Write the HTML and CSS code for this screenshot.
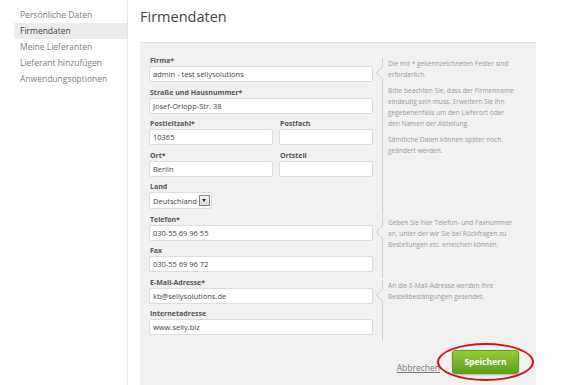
FILE: index.html
```html
<!DOCTYPE html>
<html lang="de">
<head>
  <meta charset="UTF-8" />
  <title>Firmendaten</title>
  <link rel="stylesheet" href="styles.css">
</head>
<body>
  <div class="layout">
    <ul class="sidebar">
      <li>Persönliche Daten</li>
      <li class="active">Firmendaten</li>
      <li>Meine Lieferanten</li>
      <li>Lieferant hinzufügen</li>
      <li>Anwendungsoptionen</li>
    </ul>

    <div class="main">
      <h1>Firmendaten</h1>

      <div class="panel">
        <!-- Adresse -->
        <div class="section">
          <div class="fields">
            <div class="field">
              <label>Firma*</label>
              <input type="text" value="admin - test sellysolutions" />
            </div>
            <div class="field">
              <label>Straße und Hausnummer*</label>
              <input type="text" value="Josef-Orlopp-Str. 38" />
            </div>
            <div class="pair">
              <div class="field wide">
                <label>Postleitzahl*</label>
                <input type="text" value="10365" />
              </div>
              <div class="field">
                <label>Postfach</label>
                <input type="text" value="" />
              </div>
            </div>
            <div class="pair">
              <div class="field wide">
                <label>Ort*</label>
                <input type="text" value="Berlin" />
              </div>
              <div class="field">
                <label>Ortsteil</label>
                <input type="text" value="" />
              </div>
            </div>
            <div class="field">
              <label>Land</label>
              <div class="select">
                <span>Deutschland</span>
                <span class="select-btn"></span>
              </div>
            </div>
          </div>
          <div class="help">
            <p>Die mit * gekennzeichneten Felder sind erforderlich.</p>
            <p>Bitte beachten Sie, dass der Firmenname eindeutig sein muss. Erweitern Sie ihn gegebenenfalls um den Lieferort oder den Namen der Abteilung.</p>
            <p>Sämtliche Daten können später noch geändert werden.</p>
          </div>
        </div>

        <!-- Kontakt -->
        <div class="section">
          <div class="fields">
            <div class="field">
              <label>Telefon*</label>
              <input type="text" value="030-55 69 96 55" />
            </div>
            <div class="field">
              <label>Fax</label>
              <input type="text" value="030-55 69 96 72" />
            </div>
          </div>
          <div class="help">
            <p>Geben Sie hier Telefon- und Faxnummer an, unter der wir Sie bei Rückfragen zu Bestellungen etc. erreichen können.</p>
          </div>
        </div>

        <div class="section">
          <div class="fields">
            <div class="field">
              <label>E-Mail-Adresse*</label>
              <input type="text" value="kb@sellysolutions.de" />
            </div>
            <div class="field">
              <label>Internetadresse</label>
              <input type="text" value="www.selly.biz" />
            </div>
          </div>
          <div class="help">
            <p>An die E-Mail-Adresse werden Ihre Bestellbestätigungen gesendet.</p>
          </div>
        </div>

        <div class="actions">
          <a href="#" class="cancel">Abbrechen</a>
          <span class="save-wrap">
            <button class="save">Speichern</button>
          </span>
        </div>
      </div>
    </div>
  </div>
</body>
</html>
```

FILE: styles.css
```css
body {
  margin: 0;
  font-family: "Open Sans", "Liberation Sans", sans-serif;
  color: #444;
  background: #fff;
  overflow: hidden;
}

.layout {
  display: flex;
  height: 385px;
}

/* Seitennavigation */
.sidebar {
  list-style: none;
  margin: 0;
  padding: 7px 0 0 14px;
  width: 113px;
  border-right: 1px solid #e6e6e6;
}
.sidebar li {
  height: 16px;
  line-height: 16px;
  padding-left: 6px;
  font-size: 8.5px;
  color: #808080;
}
.sidebar li.active {
  background: #ececec;
  color: #444;
}

.main {
  margin-left: 12px;
  width: 396px;
}

h1 {
  margin: 0;
  padding-top: 7px;
  height: 42px;
  box-sizing: border-box;
  font-size: 14.5px;
  font-weight: 400;
  line-height: 20px;
  color: #444;
}

.panel {
  background: #f1f1f1;
  border-top: 1px solid #dcdcdc;
  padding: 13px 17px 0 9px;
  height: 400px;
}

.section {
  display: flex;
  gap: 9px;
}

.fields {
  width: 224px;
  flex: none;
}

.field {
  margin-bottom: 5.5px;
}
.field label {
  display: block;
  font-size: 7px;
  font-weight: 700;
  line-height: 10px;
  color: #555;
  padding-left: 1px;
}
.field input {
  display: block;
  width: 100%;
  box-sizing: border-box;
  height: 16px;
  margin: 0;
  padding: 0 3px;
  border: 1px solid #dcdcdc;
  border-radius: 2px;
  background: #fff;
  font-family: inherit;
  font-size: 7.5px;
  color: #444;
}

.pair {
  display: flex;
  gap: 6px;
}
.pair .field { flex: 1; }
.pair .field.wide { flex: none; width: 124px; }

/* Land Auswahl */
.select {
  display: flex;
  width: fit-content;
  align-items: center;
  gap: 2px;
  height: 17px;
  box-sizing: border-box;
  padding: 0 1px 0 3px;
  border: 1px solid #dcdcdc;
  border-radius: 2px;
  background: #fff;
  font-size: 7.5px;
  color: #444;
}
.select-btn {
  position: relative;
  width: 9px;
  height: 9px;
  border: 1px solid #888;
  background: linear-gradient(#f4f4f4, #d8d8d8);
}
.select-btn::after {
  content: "";
  position: absolute;
  left: 2px;
  top: 3px;
  border-left: 2.5px solid transparent;
  border-right: 2.5px solid transparent;
  border-top: 3px solid #222;
}

/* Hinweise rechts */
.help {
  position: relative;
  flex: none;
  width: 127px;
  margin-top: 2px;
  border-left: 1px solid #cfcfcf;
  padding-left: 5px;
  font-size: 6.6px;
  line-height: 11px;
  color: #9a9a9a;
}
.help p { margin: 0 0 5px; }

/* Pfeil zum Eingabefeld */
.help::before,
.help::after {
  content: "";
  position: absolute;
  top: 9px;
  border-top: 6px solid transparent;
  border-bottom: 6px solid transparent;
}
.help::before {
  left: -7px;
  border-right: 6px solid #cfcfcf;
}
.help::after {
  left: -6px;
  border-right: 6px solid #f1f1f1;
}

.actions {
  display: flex;
  justify-content: flex-end;
  align-items: flex-end;
  gap: 12px;
  margin-top: 9px;
}
.cancel {
  font-size: 8.5px;
  color: #777;
  line-height: 12px;
}
.save-wrap {
  position: relative;
  display: inline-block;
}
.save {
  display: block;
  width: 67px;
  height: 24px;
  border: 1px solid #5d9a1e;
  border-radius: 3px;
  background: linear-gradient(#94cc3d, #5e9f1d);
  box-shadow: 0 1px 2px rgba(0, 0, 0, 0.25);
  color: #fff;
  font-family: inherit;
  font-size: 8.5px;
  font-weight: 700;
}
/* rote Markierung um den Button */
.save-wrap::after {
  content: "";
  position: absolute;
  left: -15px;
  top: -7px;
  width: 93px;
  height: 34px;
  border: 2px solid #d2141c;
  border-radius: 50%;
}
```
